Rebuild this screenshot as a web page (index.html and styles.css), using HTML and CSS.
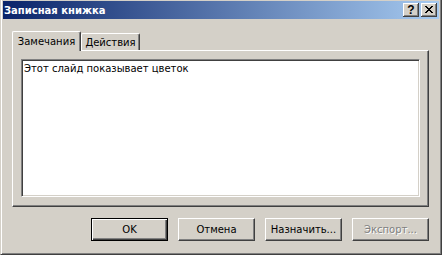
FILE: index.html
```html
<!DOCTYPE html>
<html lang="ru">
<head>
<meta charset="utf-8">
<title>Записная книжка</title>
<link rel="stylesheet" href="styles.css">
</head>
<body>
<div class="window">
  <div class="titlebar">
    <span class="title">Записная книжка</span>
    <div class="cbtns">
      <span class="cbtn help">?</span>
      <span class="cbtn close">
        <svg width="8" height="7" viewBox="0 0 8 7" shape-rendering="crispEdges">
          <path d="M0 0h2v1h-2z M6 0h2v1h-2z M1 1h2v1h-2z M5 1h2v1h-2z M2 2h4v1h-4z M3 3h2v1h-2z M2 4h4v1h-4z M1 5h2v1h-2z M5 5h2v1h-2z M0 6h2v1h-2z M6 6h2v1h-2z" fill="#000"/>
        </svg>
      </span>
    </div>
  </div>
  <div class="content">
    <div class="tabs">
      <div class="tab active">Замечания</div>
      <div class="tab">Действия</div>
    </div>
    <div class="panel">
      <div class="textbox">Этот слайд показывает цветок</div>
    </div>
    <div class="buttons">
      <div class="btn default">OK</div>
      <div class="btn">Отмена</div>
      <div class="btn">Назначить...</div>
      <div class="btn disabled">Экспорт...</div>
    </div>
  </div>
</div>
</body>
</html>
```
FILE: styles.css
```css
* { box-sizing: border-box; margin: 0; padding: 0; }
html, body { margin: 0; background: #D4D0C8; }
body {
  width: 442px;
  height: 255px;
  overflow: hidden;
  font-family: "DejaVu Sans", "Liberation Sans", Arial, sans-serif;
  font-size: 10px;
  color: #000;
}
.window {
  width: 442px;
  height: 255px;
  background: #D4D0C8;
  border-left: 1px solid #D4D0C8;
  border-right: 1px solid #404040;
  border-bottom: 1px solid #404040;
  box-shadow: inset 1px 0 #fff, inset -1px -1px #808080;
  padding: 1px 2px 0 2px;
  display: flex;
  flex-direction: column;
}
.titlebar {
  height: 18px;
  background: linear-gradient(to right, #0A246A, #A6CAF0);
  display: flex;
  align-items: center;
  justify-content: space-between;
  padding: 0 2px 0 1px;
}
.title {
  color: #fff;
  font-weight: bold;
  font-size: 10px;
  line-height: 13px;
}
.cbtns { display: flex; gap: 2px; }
.cbtn {
  width: 16px;
  height: 14px;
  background: #D4D0C8;
  box-shadow: inset -1px -1px #404040, inset 1px 1px #fff, inset -2px -2px #808080;
  display: flex;
  align-items: center;
  justify-content: center;
}
.help {
  font-family: "Liberation Sans", Arial, sans-serif;
  font-weight: bold;
  font-size: 12px;
  line-height: 12px;
  padding-bottom: 1px;
}
.close svg { display: block; margin-bottom: 1px; }
.content {
  flex: 1;
  display: flex;
  flex-direction: column;
}
.tabs {
  display: flex;
  align-items: flex-end;
  height: 19px;
  margin: 12px 0 0 9px;
  position: relative;
  z-index: 1;
}
.tab {
  height: 17px;
  width: 59px;
  text-align: center;
  line-height: 13px;
  padding-top: 2px;
  border-top: 1px solid #fff;
  border-left: 1px solid #fff;
  border-right: 1px solid #404040;
  box-shadow: inset -1px 0 #808080;
  border-top-left-radius: 2px;
  border-top-right-radius: 2px;
  background: #D4D0C8;
}
.tab.active {
  width: 69px;
  height: 20px;
  margin-bottom: -1px;
  padding-top: 3px;
}
.panel {
  margin-left: 9px;
  width: 417px;
  height: 157px;
  border-top: 1px solid #fff;
  border-left: 1px solid #fff;
  border-right: 1px solid #404040;
  border-bottom: 1px solid #404040;
  box-shadow: inset -1px -1px #808080;
  padding: 8px 8px 9px 8px;
  display: flex;
}
.textbox {
  flex: 1;
  background: #fff;
  border-top: 1px solid #808080;
  border-left: 1px solid #808080;
  border-right: 1px solid #fff;
  border-bottom: 1px solid #fff;
  box-shadow: inset 1px 1px #404040, inset -1px -1px #D4D0C8;
  padding: 2px 2px;
  line-height: 13px;
}
.buttons {
  margin-top: 11px;
  display: flex;
  gap: 10px;
  justify-content: flex-end;
  padding-right: 10px;
}
.btn {
  width: 77px;
  height: 23px;
  display: flex;
  align-items: center;
  justify-content: center;
  border-top: 1px solid #fff;
  border-left: 1px solid #fff;
  border-right: 1px solid #404040;
  border-bottom: 1px solid #404040;
  box-shadow: inset -1px -1px #808080;
  background: #D4D0C8;
  line-height: 13px;
}
.btn.default {
  border: 1px solid #000;
  box-shadow: inset 1px 1px #fff, inset -1px -1px #404040, inset -2px -2px #808080;
}
.btn.disabled {
  color: #808080;
  text-shadow: 1px 1px #fff;
}
```
